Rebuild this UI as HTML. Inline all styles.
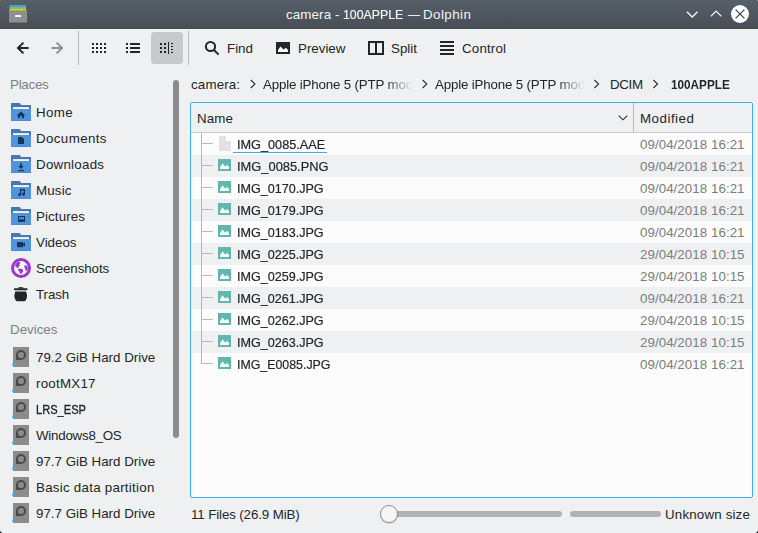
<!DOCTYPE html>
<html>
<head>
<meta charset="utf-8">
<title>camera - 100APPLE — Dolphin</title>
<style>
html,body{margin:0;padding:0;}
body{width:758px;height:533px;overflow:hidden;background:#eff0f1;position:relative;
  font-family:"Liberation Sans","DejaVu Sans",sans-serif;font-size:13.33px;color:#232629;}
.abs{position:absolute;}
.t{position:absolute;white-space:nowrap;line-height:16px;height:16px;}
svg{position:absolute;overflow:visible;}
#titlebar{left:0;top:0;width:758px;height:29px;background:linear-gradient(#566069,#474d55);}
#title{left:0;width:758px;text-align:center;top:7px;color:#f2f3f3;}
.sep{position:absolute;top:31px;width:1px;height:34px;background:#bcbdbf;}
.tt{color:#f2f3f3;}
.sechdr{color:#7d8184;}
.date{color:#7b7d7f;left:640px;}
.row{position:absolute;left:191px;width:561px;height:22px;}
.alt{background:#eff0f1;}
.fn{left:237px;}
.crumb{width:149px;overflow:hidden;-webkit-mask-image:linear-gradient(to right,#000 0,#000 122px,transparent 149px);mask-image:linear-gradient(to right,#000 0,#000 122px,transparent 149px);}
</style>
</head>
<body>

<!-- ===== title bar ===== -->
<div id="titlebar" class="abs"></div>
<svg style="left:9px;top:5px" width="18" height="18" viewBox="0 0 18 18">
  <rect x="0.5" y="0" width="16.5" height="2.2" fill="#4f9ae3"/>
  <rect x="0.5" y="2" width="16.5" height="2" fill="#6fcb4e"/>
  <rect x="0.5" y="4" width="16.5" height="1.8" fill="#f5c141"/>
  <rect x="0" y="5.6" width="18" height="12.4" fill="#8f8f8f"/>
  <rect x="0" y="17.4" width="18" height="0.8" fill="#3e444a" opacity=".6"/>
  <rect x="6" y="10" width="6" height="2" rx=".6" fill="#fafafa"/>
</svg>
<div class="t tt" style="left:286px;top:7px;letter-spacing:0.12px">camera -</div>
<div class="t tt" style="left:342.9px;top:7px;transform:scaleX(0.925);transform-origin:0 0;-webkit-text-stroke:0.2px currentColor">100APPLE</div>
<div class="t tt" style="left:407.6px;top:7px;transform:scaleX(0.9);transform-origin:0 0;-webkit-text-stroke:0.2px currentColor">—</div>
<div class="t tt" style="left:423px;top:7px;letter-spacing:0.45px">Dolphin</div>
<svg style="left:678px;top:0" width="80" height="29" viewBox="0 0 80 29">
  <path d="M8.9 11.7 L14.2 17 L19.5 11.7" fill="none" stroke="#fcfcfc" stroke-width="1.25"/>
  <path d="M32.8 16.4 L38.1 11.1 L43.4 16.4" fill="none" stroke="#fcfcfc" stroke-width="1.25"/>
  <circle cx="62" cy="14" r="9" fill="#fcfcfc"/>
  <path d="M57.6 9.6 L66.4 18.4 M66.4 9.6 L57.6 18.4" fill="none" stroke="#3f464c" stroke-width="1.25"/>
</svg>

<!-- ===== toolbar ===== -->
<svg style="left:0;top:30px" width="520" height="36" viewBox="0 30 520 36">
  <!-- back -->
  <path d="M28.6 48 H18.6 M23.4 42.6 L18 48 L23.4 53.4" fill="none" stroke="#232629" stroke-width="2"/>
  <!-- forward -->
  <path d="M51.4 48 H61.4 M56.6 42.6 L62 48 L56.6 53.4" fill="none" stroke="#8e9092" stroke-width="2"/>
  <!-- icons view -->
  <g fill="#232629">
    <rect x="92" y="43" width="2" height="2"/><rect x="96" y="43" width="2" height="2"/><rect x="100" y="43" width="2" height="2"/><rect x="104" y="43" width="2" height="2"/>
    <rect x="92" y="47" width="2" height="2"/><rect x="96" y="47" width="2" height="2"/><rect x="100" y="47" width="2" height="2"/><rect x="104" y="47" width="2" height="2"/>
    <rect x="92" y="51" width="2" height="2"/><rect x="96" y="51" width="2" height="2"/><rect x="100" y="51" width="2" height="2"/><rect x="104" y="51" width="2" height="2"/>
  </g>
  <!-- compact list view -->
  <g fill="#232629">
    <rect x="126" y="43" width="2" height="2"/><rect x="130" y="43" width="10" height="2"/>
    <rect x="126" y="47" width="2" height="2"/><rect x="130" y="47" width="10" height="2"/>
    <rect x="126" y="51" width="2" height="2"/><rect x="130" y="51" width="10" height="2"/>
  </g>
  <!-- details view (active) -->
  <rect x="151" y="32" width="32" height="32" rx="3" fill="#c8c9cb"/>
  <g fill="#232629">
    <rect x="160" y="43" width="2" height="2"/><rect x="164" y="43" width="2" height="2"/>
    <rect x="160" y="47" width="2" height="2"/><rect x="164" y="47" width="2" height="2"/>
    <rect x="160" y="51" width="2" height="2"/><rect x="164" y="51" width="2" height="2"/>
    <rect x="168" y="42" width="1" height="12"/>
    <rect x="171" y="43" width="2" height="1"/><rect x="171" y="46" width="2" height="1"/><rect x="171" y="49" width="2" height="1"/><rect x="171" y="52" width="2" height="1"/>
  </g>
  <!-- find -->
  <circle cx="210.5" cy="46.5" r="4.6" fill="none" stroke="#232629" stroke-width="2"/>
  <path d="M214 50 L218.6 54.6" stroke="#232629" stroke-width="2" fill="none"/>
  <!-- preview -->
  <rect x="276" y="42" width="14" height="12" fill="#232629"/>
  <path d="M278 52 V50 L280.5 46.6 L283.4 49.6 L286 47.8 L288 50 V52 Z" fill="#fcfcfc"/>
  <!-- split -->
  <rect x="369" y="42" width="14" height="12" fill="none" stroke="#232629" stroke-width="2"/>
  <rect x="375" y="41" width="2" height="14" fill="#232629"/>
  <!-- control -->
  <g fill="#232629">
    <rect x="440" y="41" width="14" height="2"/><rect x="440" y="45" width="14" height="2"/>
    <rect x="440" y="49" width="14" height="2"/><rect x="440" y="53" width="14" height="2"/>
  </g>
</svg>
<div class="sep" style="left:78px"></div>
<div class="sep" style="left:188px"></div>
<div class="t" style="left:227px;top:41px">Find</div>
<div class="t" style="left:298px;top:41px">Preview</div>
<div class="t" style="left:391px;top:41px">Split</div>
<div class="t" style="left:462px;top:41px;letter-spacing:0.18px">Control</div>

<!-- ===== sidebar ===== -->
<svg width="0" height="0" style="left:0;top:0">
  <defs>
    <g id="folder">
      <path d="M0 0.6 Q0 0 0.6 0 H8.6 Q9.2 0 9.4 0.6 L9.9 2 H19.4 Q20 2 20 2.6 V6.5 H0 Z" fill="#4678b4"/>
      <rect x="2" y="4.1" width="16" height="2" fill="#f7f1ea"/>
      <path d="M0 6 H20 V17.4 Q20 18 19.4 18 H0.6 Q0 18 0 17.4 Z" fill="#4f95de"/>
      <rect x="0.3" y="17.2" width="19.4" height="0.8" fill="#4689d8"/>
    </g>
    <g id="hdd">
      <rect x="0" y="0" width="16" height="20" fill="#8b8b8b"/>
      <path d="M3 8 A5 5 0 1 1 8 13 H3 Z" fill="#4a4a4a"/>
      <circle cx="8" cy="8" r="3.1" fill="#8b8b8b"/>
      <circle cx="0.6" cy="17.6" r="1.6" fill="#3daee9"/>
    </g>
  </defs>
</svg>
<div class="t sechdr" style="left:10px;top:77px;letter-spacing:-0.26px">Places</div>
<svg style="left:0;top:100px" width="40" height="210" viewBox="0 100 40 210">
  <!-- home -->
  <use href="#folder" x="11" y="103"/>
  <path d="M21 111.6 L25.4 115.4 H24 V118.2 H22 V116 H20 V118.2 H18 V115.4 H16.6 Z" fill="#1c3556"/>
  <!-- documents -->
  <use href="#folder" x="11" y="129"/>
  <path d="M18 137 H22 L24 139 V144 H18 Z" fill="#1c3556"/>
  <!-- downloads -->
  <use href="#folder" x="11" y="155"/>
  <path d="M20.2 163 H21.8 V166 H23.8 L21 169 L18.2 166 H20.2 Z" fill="#1c3556"/>
  <rect x="18" y="170" width="6" height="1.2" fill="#1c3556"/>
  <!-- music -->
  <use href="#folder" x="11" y="181"/>
  <path d="M20 189 H25 V194.2 A1.5 1.5 0 1 1 23.8 192.8 V190.6 H21.2 V194.6 A1.5 1.5 0 1 1 20 193.2 Z" fill="#1c3556"/>
  <!-- pictures -->
  <use href="#folder" x="11" y="207"/>
  <rect x="18" y="216" width="7" height="6" fill="#1c3556"/>
  <path d="M19 217.2 H24 V220 L22.8 218.8 L21.8 219.8 L20.4 218.4 L19 220 Z" fill="#4f95de"/>
  <!-- videos -->
  <use href="#folder" x="11" y="233"/>
  <path d="M17 242 H23 V243.6 L25 242.4 V246.8 L23 245.6 V247.2 H17 Z" fill="#1c3556"/>
  <!-- screenshots (globe) -->
  <circle cx="21" cy="268" r="10" fill="#9a39c7"/>
  <circle cx="21" cy="268" r="6.9" fill="#fdfdfd"/>
  <path d="M19.6 261.6 L20.4 263 L19.2 264.2 L20.2 265.6 L18.6 266.4 L18.4 268 L17 268.2 L16.4 266.8 L15 266.4 L15.4 264.4 L17 262.6 Z" fill="#9a39c7"/>
  <path d="M18 269.2 L20.4 268.4 L22.8 269.2 L23.2 271.2 L22 273 L20.8 274.2 L19.6 272.8 L19.2 271 L18 270.4 Z" fill="#9a39c7"/>
  <path d="M24.6 265 L26.6 265.4 L27.7 267.6 L27.2 270.2 L26 271.6 L25.4 269.4 L24.4 267.6 Z" fill="#9a39c7"/>
  <!-- trash -->
  <rect x="18.4" y="287.2" width="4.8" height="1.4" fill="#232629"/>
  <rect x="14" y="288.2" width="13.4" height="2" rx=".4" fill="#232629"/>
  <path d="M15.4 291.4 H26 Q27.6 294.6 26.8 298 L25.6 300.4 Q25.2 301.2 24.4 301.2 H17 Q16.2 301.2 15.8 300.4 L14.6 298 Q13.8 294.6 15.4 291.4 Z" fill="#232629"/>
</svg>
<div class="t" style="left:36px;top:105px;letter-spacing:0.4px">Home</div>
<div class="t" style="left:36px;top:131px;letter-spacing:0.39px">Documents</div>
<div class="t" style="left:36px;top:157px;letter-spacing:0.26px">Downloads</div>
<div class="t" style="left:36px;top:183px;letter-spacing:0.17px">Music</div>
<div class="t" style="left:36px;top:209px;letter-spacing:0.11px">Pictures</div>
<div class="t" style="left:36px;top:235px">Videos</div>
<div class="t" style="left:36px;top:261px;letter-spacing:-0.09px">Screenshots</div>
<div class="t" style="left:36px;top:287px;letter-spacing:-0.1px">Trash</div>
<div class="t sechdr" style="left:10px;top:322px">Devices</div>
<svg style="left:0;top:340px" width="40" height="193" viewBox="0 340 40 193">
  <use href="#hdd" x="13" y="347"/>
  <use href="#hdd" x="13" y="373"/>
  <use href="#hdd" x="13" y="399"/>
  <use href="#hdd" x="13" y="425"/>
  <use href="#hdd" x="13" y="451"/>
  <use href="#hdd" x="13" y="477"/>
  <use href="#hdd" x="13" y="503"/>
</svg>
<div class="t" style="left:36px;top:350px">79.2 GiB Hard Drive</div>
<div class="t" style="left:36px;top:376px;letter-spacing:0.24px">rootMX17</div>
<div class="t" style="left:36px;top:402px;transform:scaleX(0.8322);transform-origin:0 0;-webkit-text-stroke:0.35px currentColor">LRS_ESP</div>
<div class="t" style="left:36px;top:428px;letter-spacing:-0.24px">Windows8_OS</div>
<div class="t" style="left:36px;top:454px">97.7 GiB Hard Drive</div>
<div class="t" style="left:36px;top:480px;letter-spacing:0.26px">Basic data partition</div>
<div class="t" style="left:36px;top:506px">97.7 GiB Hard Drive</div>
<div class="abs" style="left:173px;top:80px;width:6px;height:358px;border-radius:3px;background:#8a8b8c"></div>

<!-- ===== breadcrumb ===== -->
<div class="t" style="left:191px;top:77px;letter-spacing:0.15px">camera:</div>
<div class="t crumb" style="left:263px;top:77px;letter-spacing:-0.17px">Apple iPhone 5 (PTP mode)</div>
<div class="t crumb" style="left:435px;top:77px;letter-spacing:-0.17px">Apple iPhone 5 (PTP mode)</div>
<div class="t" style="left:610px;top:77px;letter-spacing:-0.33px">DCIM</div>
<div class="t" style="left:671px;top:77px;font-weight:bold;transform:scaleX(0.8806);transform-origin:0 0">100APPLE</div>
<svg style="left:185px;top:70px" width="573" height="30" viewBox="185 70 573 30">
  <g fill="none" stroke="#2f3336" stroke-width="1.12">
    <path d="M250.8 80 L255 84 L250.8 88"/>
    <path d="M422.6 80 L426.8 84 L422.6 88"/>
    <path d="M594.4 80 L598.6 84 L594.4 88"/>
    <path d="M653.4 80 L657.6 84 L653.4 88"/>
  </g>
</svg>

<!-- ===== file view ===== -->
<div class="abs" style="left:190px;top:102px;width:561px;height:394px;border:1px solid #3daee9;border-radius:2px;background:#fcfcfc"></div>
<div class="abs" style="left:191px;top:103px;width:561px;height:29px;background:#eff0f1;border-radius:1px 1px 0 0"></div>
<div class="abs" style="left:191px;top:132px;width:561px;height:1px;background:#cbcccd"></div>
<div class="abs" style="left:633px;top:103px;width:1px;height:29px;background:#bcbdbf"></div>
<svg style="left:615px;top:110px" width="16" height="14" viewBox="615 110 16 14"><path d="M618.8 115.6 L623 119.8 L627.2 115.6" fill="none" stroke="#2b2e31" stroke-width="1.1"/></svg>
<div class="t" style="left:197px;top:111px;letter-spacing:0.1px">Name</div>
<div class="t" style="left:640px;top:111px;letter-spacing:0.5px">Modified</div>
<div class="row alt" style="top:155px"></div>
<div class="row alt" style="top:199px"></div>
<div class="row alt" style="top:243px"></div>
<div class="row alt" style="top:287px"></div>
<div class="row alt" style="top:331px"></div>
<svg style="left:190px;top:133px" width="60" height="244" viewBox="190 133 60 244">
  <defs><g id="img"><rect x="0" y="0" width="13" height="12" fill="#5fb8ad"/><path d="M2 10 V8.4 L4.4 4.2 L7 7.6 L9.4 6 L11 8 V10 Z" fill="#fdfdfd"/></g></defs>
  <rect x="201" y="133" width="1" height="231" fill="#b8b9ba"/>
  <rect x="201" y="143" width="12" height="1" fill="#b8b9ba"/>
  <path d="M219 136 H226 V141 H231 V151 H219 Z" fill="#e2e2e2"/>
  <rect x="201" y="165" width="12" height="1" fill="#b8b9ba"/>
  <use href="#img" x="218" y="159"/>
  <rect x="201" y="187" width="12" height="1" fill="#b8b9ba"/>
  <use href="#img" x="218" y="181"/>
  <rect x="201" y="209" width="12" height="1" fill="#b8b9ba"/>
  <use href="#img" x="218" y="203"/>
  <rect x="201" y="231" width="12" height="1" fill="#b8b9ba"/>
  <use href="#img" x="218" y="225"/>
  <rect x="201" y="253" width="12" height="1" fill="#b8b9ba"/>
  <use href="#img" x="218" y="247"/>
  <rect x="201" y="275" width="12" height="1" fill="#b8b9ba"/>
  <use href="#img" x="218" y="269"/>
  <rect x="201" y="297" width="12" height="1" fill="#b8b9ba"/>
  <use href="#img" x="218" y="291"/>
  <rect x="201" y="319" width="12" height="1" fill="#b8b9ba"/>
  <use href="#img" x="218" y="313"/>
  <rect x="201" y="341" width="12" height="1" fill="#b8b9ba"/>
  <use href="#img" x="218" y="335"/>
  <rect x="201" y="363" width="12" height="1" fill="#b8b9ba"/>
  <use href="#img" x="218" y="357"/>
</svg>
<div class="t fn" style="top:137px;transform:scaleX(0.9522);transform-origin:0 0;-webkit-text-stroke:0.2px currentColor">IMG_0085.AAE</div><div class="t date" style="top:137px;letter-spacing:0.05px">09/04/2018 16:21</div>
<div class="t fn" style="top:159px;transform:scaleX(0.966);transform-origin:0 0;-webkit-text-stroke:0.2px currentColor">IMG_0085.PNG</div><div class="t date" style="top:159px;letter-spacing:0.05px">09/04/2018 16:21</div>
<div class="t fn" style="top:181px;transform:scaleX(0.9433);transform-origin:0 0;-webkit-text-stroke:0.2px currentColor">IMG_0170.JPG</div><div class="t date" style="top:181px;letter-spacing:0.05px">09/04/2018 16:21</div>
<div class="t fn" style="top:203px;transform:scaleX(0.9433);transform-origin:0 0;-webkit-text-stroke:0.2px currentColor">IMG_0179.JPG</div><div class="t date" style="top:203px;letter-spacing:0.05px">09/04/2018 16:21</div>
<div class="t fn" style="top:225px;transform:scaleX(0.9433);transform-origin:0 0;-webkit-text-stroke:0.2px currentColor">IMG_0183.JPG</div><div class="t date" style="top:225px;letter-spacing:0.05px">09/04/2018 16:21</div>
<div class="t fn" style="top:247px;transform:scaleX(0.9433);transform-origin:0 0;-webkit-text-stroke:0.2px currentColor">IMG_0225.JPG</div><div class="t date" style="top:247px;letter-spacing:0.05px">29/04/2018 10:15</div>
<div class="t fn" style="top:269px;transform:scaleX(0.9433);transform-origin:0 0;-webkit-text-stroke:0.2px currentColor">IMG_0259.JPG</div><div class="t date" style="top:269px;letter-spacing:0.05px">29/04/2018 10:15</div>
<div class="t fn" style="top:291px;transform:scaleX(0.9433);transform-origin:0 0;-webkit-text-stroke:0.2px currentColor">IMG_0261.JPG</div><div class="t date" style="top:291px;letter-spacing:0.05px">09/04/2018 16:21</div>
<div class="t fn" style="top:313px;transform:scaleX(0.9433);transform-origin:0 0;-webkit-text-stroke:0.2px currentColor">IMG_0262.JPG</div><div class="t date" style="top:313px;letter-spacing:0.05px">29/04/2018 10:15</div>
<div class="t fn" style="top:335px;transform:scaleX(0.9433);transform-origin:0 0;-webkit-text-stroke:0.2px currentColor">IMG_0263.JPG</div><div class="t date" style="top:335px;letter-spacing:0.05px">29/04/2018 10:15</div>
<div class="t fn" style="top:357px;transform:scaleX(0.9273);transform-origin:0 0;-webkit-text-stroke:0.2px currentColor">IMG_E0085.JPG</div><div class="t date" style="top:357px;letter-spacing:0.05px">09/04/2018 16:21</div>
<div class="abs" style="left:233px;top:152px;width:94px;height:1px;background:#3daee9"></div>

<!-- ===== status bar ===== -->
<div class="t" style="left:191px;top:507px;letter-spacing:-0.12px">11 Files (26.9 MiB)</div>
<div class="abs" style="left:389px;top:511px;width:173px;height:6px;border-radius:3px;background:#b0b1b2"></div>
<div class="abs" style="left:380px;top:505px;width:16px;height:16px;border-radius:50%;border:1px solid #8e8f90;background:#f6f6f7;box-shadow:0 1px 1px rgba(0,0,0,.15)"></div>
<div class="abs" style="left:570px;top:511px;width:91px;height:6px;border-radius:3px;background:#b0b1b2"></div>
<div class="t" style="left:665px;top:507px;letter-spacing:0.17px">Unknown size</div>


<!-- ===== window corners ===== -->
<svg style="left:0;top:0" width="758" height="533" viewBox="0 0 758 533">
  <path d="M0 0 H1.8 Q0.3 0.3 0 1.8 Z" fill="#a8711f"/>
  <path d="M758 0 H756.2 Q757.7 0.3 758 1.8 Z" fill="#c9a05c"/>
  <path d="M0 533 V530.4 Q0.4 532.6 2.6 533 Z" fill="#0a0a0a"/>
  <path d="M758 533 V530.4 Q757.6 532.6 755.4 533 Z" fill="#0a0a0a"/>
</svg>
</body>
</html>
